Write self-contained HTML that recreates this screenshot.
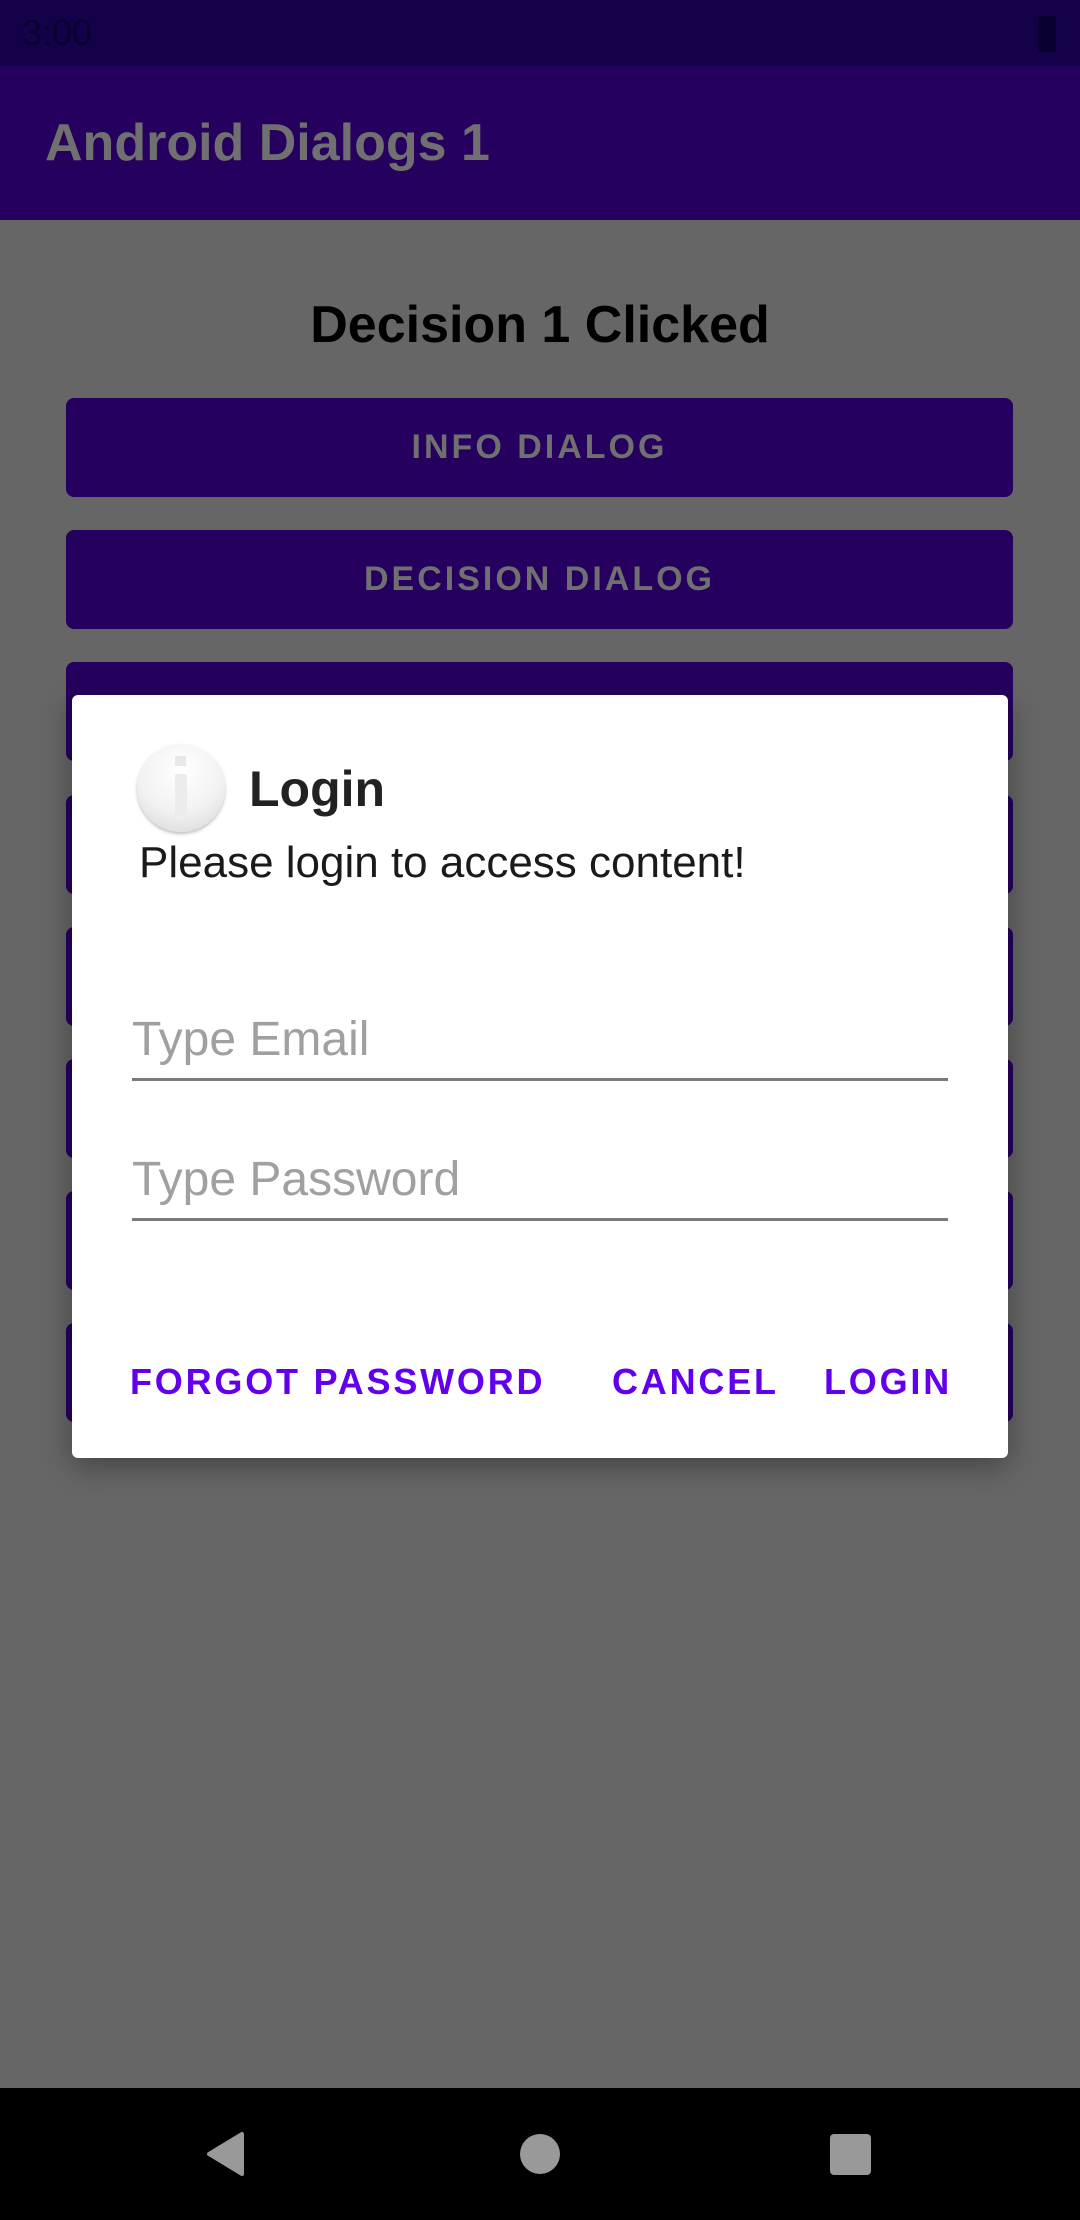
<!DOCTYPE html>
<html><head><meta charset="utf-8"><style>
*{margin:0;padding:0;box-sizing:border-box}
body{width:1080px;height:2220px;background:#666;font-family:"Liberation Sans",sans-serif;position:relative;overflow:hidden}
.sb{position:absolute;left:0;top:0;width:1080px;height:66px;background:#15004a}
.ab{position:absolute;left:0;top:66px;width:1080px;height:154px;background:#25005e}
.ab span{position:absolute;left:45px;top:47px;font-size:52px;font-weight:bold;color:#707070}
.hd{position:absolute;left:0;width:1080px;top:295px;text-align:center;font-size:52px;font-weight:bold;color:#000}
.btn{position:absolute;left:66px;width:947px;height:99px;background:#25005e;border-radius:8px;color:#707070;font-size:34px;font-weight:bold;letter-spacing:3px;text-align:center;line-height:99px}
.dlg{position:absolute;left:72px;top:695px;width:936px;height:763px;background:#fff;border-radius:6px;box-shadow:0 8px 30px rgba(0,0,0,.35)}
.ic{position:absolute;left:137px;top:744px;width:88px;height:88px;border-radius:50%;background:radial-gradient(circle at 50% 30%,#fff 0%,#f2f2f2 55%,#d4d4d4 100%);box-shadow:0 2px 3px rgba(0,0,0,.25)}
.ic:before{content:"";position:absolute;left:38px;top:12px;width:11px;height:10px;background:#e8e8e8}
.ic:after{content:"";position:absolute;left:38px;top:30px;width:12px;height:42px;background:#ececec;border-radius:2px}
.t{position:absolute;left:249px;top:760px;font-size:50px;font-weight:bold;color:#222}
.m{position:absolute;left:139px;top:838px;font-size:44px;color:#1a1a1a}
.in{position:absolute;left:132px;width:816px;border-bottom:3px solid #7a7a7a;font-size:48px;color:#a0a0a0;height:0}
.a{position:absolute;top:1361px;font-size:36px;color:#6200ee;letter-spacing:2.8px;font-weight:bold}
.nb{position:absolute;left:0;top:2088px;width:1080px;height:132px;background:#000}
</style></head><body>
<div class="sb">
<span style="position:absolute;left:22px;top:12px;font-size:36px;color:#0a0030">3:00</span>
<div style="position:absolute;left:1038px;top:16px;width:18px;height:36px;background:#0a0030;border-radius:2px"></div>
</div>
<div class="ab"><span>Android Dialogs 1</span></div>
<div class="hd">Decision 1 Clicked</div>
<div class="btn" style="top:398px">INFO DIALOG</div>
<div class="btn" style="top:530px">DECISION DIALOG</div>
<div class="btn" style="top:662px"></div>
<div class="btn" style="top:795px"></div>
<div class="btn" style="top:927px"></div>
<div class="btn" style="top:1059px"></div>
<div class="btn" style="top:1191px"></div>
<div class="btn" style="top:1323px"></div>
<div class="dlg"></div>
<div class="ic"></div>
<div class="t">Login</div>
<div class="m">Please login to access content!</div>
<div class="in" style="top:1078px"><span style="position:absolute;left:0;top:-66px">Type Email</span></div>
<div class="in" style="top:1218px"><span style="position:absolute;left:0;top:-66px">Type Password</span></div>
<div class="a" style="left:130px">FORGOT PASSWORD</div>
<div class="a" style="left:612px">CANCEL</div>
<div class="a" style="left:824px">LOGIN</div>
<div class="nb">
<svg width="1080" height="132" style="position:absolute;left:0;top:0">
<path d="M242 46 L242 86 L209 66 Z" fill="#999" stroke="#999" stroke-width="4" stroke-linejoin="round"/>
<circle cx="540" cy="66" r="20" fill="#999"/>
<rect x="830" y="46" width="41" height="41" rx="4" fill="#999"/>
</svg>
</div>
</body></html>
